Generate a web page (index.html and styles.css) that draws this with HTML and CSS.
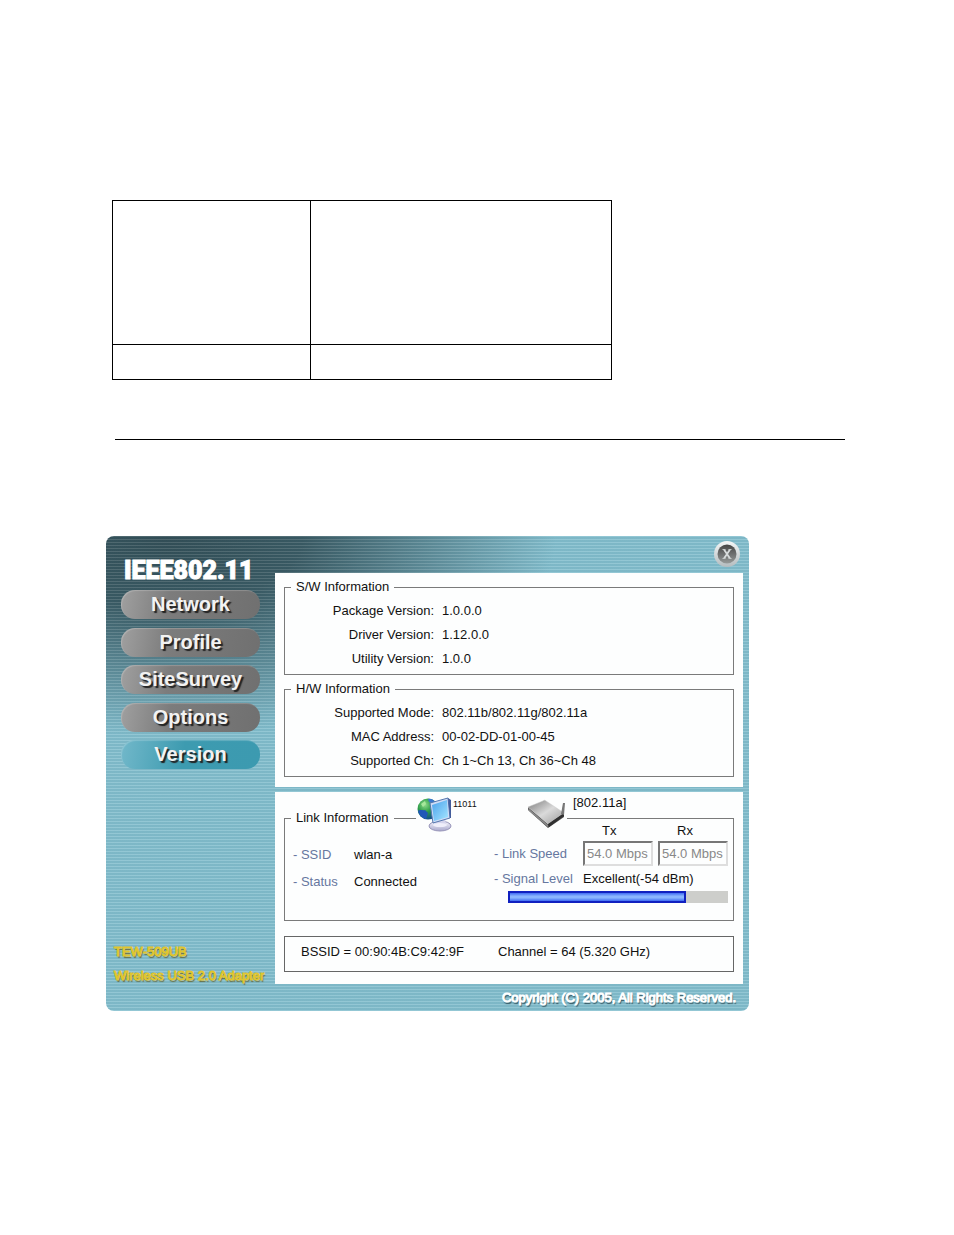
FILE: index.html
```html
<!DOCTYPE html>
<html lang="en">
<head>
	<meta charset="utf-8">
	<title>IEEE802.11 Wireless Utility</title>
	<link rel="stylesheet" href="styles.css">
</head>
<body>
	<table class="spec">
		<tr class="tall"><td></td><td></td></tr>
		<tr><td></td><td></td></tr>
	</table>

	<hr class="rule">

	<div class="utility">
		<div class="sidebar">
			<h1 class="brand">IEEE802.11</h1>
			<nav class="menu">
				<button type="button">Network</button>
				<button type="button">Profile</button>
				<button type="button">SiteSurvey</button>
				<button type="button">Options</button>
				<button type="button" class="active">Version</button>
			</nav>
			<p class="model">TEW-509UB<br>Wireless USB 2.0 Adapter</p>
		</div>

		<div class="main">
			<div class="titlebar">
				<button type="button" class="close" aria-label="Close">
					<svg viewBox="0 0 28 28" width="28" height="28">
						<defs>
							<linearGradient id="rim" x1="0" y1="0" x2="0" y2="1">
								<stop offset="0" stop-color="#f4f6f6"/>
								<stop offset="1" stop-color="#b4bcbf"/>
							</linearGradient>
							<linearGradient id="knob" x1="0" y1="0" x2="0" y2="1">
								<stop offset="0" stop-color="#454545"/>
								<stop offset="1" stop-color="#969a99"/>
							</linearGradient>
						</defs>
						<circle cx="14" cy="14" r="13" fill="url(#rim)"/>
						<circle cx="14" cy="14" r="9.500" fill="url(#knob)"/>
						<path d="M11 9.500L17 18.500M17 9.500L11 18.500" stroke="#d8dcdc" stroke-width="1.800"/>
						<path d="M9.500 9.500h3M15.500 9.500h3M9.500 18.500h3M15.500 18.500h3" stroke="#c4c8c8" stroke-width="1"/>
					</svg>
				</button>
			</div>

			<div class="panel">
				<fieldset class="group">
					<legend>S/W Information</legend>
					<dl class="info">
						<dt>Package Version:</dt><dd>1.0.0.0</dd>
						<dt>Driver Version:</dt><dd>1.12.0.0</dd>
						<dt>Utility Version:</dt><dd>1.0.0</dd>
					</dl>
				</fieldset>
				<fieldset class="group">
					<legend>H/W Information</legend>
					<dl class="info">
						<dt>Supported Mode:</dt><dd>802.11b/802.11g/802.11a</dd>
						<dt>MAC Address:</dt><dd>00-02-DD-01-00-45</dd>
						<dt>Supported Ch:</dt><dd>Ch 1~Ch 13, Ch 36~Ch 48</dd>
					</dl>
				</fieldset>
			</div>

			<div class="panel link-panel">
				<fieldset class="group link">
					<legend>Link Information</legend>

					<div class="devices">
						<svg class="computer" viewBox="0 0 36 36" width="36" height="36">
							<defs>
								<radialGradient id="globe" cx=".35" cy=".3" r=".7">
									<stop offset="0" stop-color="#8fdc8a"/>
									<stop offset=".5" stop-color="#2c9c48"/>
									<stop offset="1" stop-color="#12508c"/>
								</radialGradient>
								<linearGradient id="screen" x1="0" y1="0" x2="1" y2="1">
									<stop offset="0" stop-color="#4aa2ec"/>
									<stop offset="1" stop-color="#a5e6ff"/>
								</linearGradient>
								<linearGradient id="stand" x1="0" y1="0" x2="0" y2="1">
									<stop offset="0" stop-color="#f8f8ff"/>
									<stop offset="1" stop-color="#a9a8cc"/>
								</linearGradient>
							</defs>
							<circle cx="11" cy="12" r="10.500" fill="url(#globe)"/>
							<path d="M1 14C3 12 6 14 8 13L11 16L9 22C5 21 2 18 1 14Z" fill="#1f57b8"/>
							<path d="M11 2C14 1 17 3 18 5L15 6L12 5Z" fill="#3b77cf"/>
							<path d="M4 7L8 4L9 7L6 10Z" fill="#a7e79b"/>
							<ellipse cx="23" cy="29" rx="11" ry="5" fill="url(#stand)" stroke="#9693b8"/>
							<path d="M18 22L28 21L29 28C27 31 20 31 18 28Z" fill="#d5d4ec"/>
							<ellipse cx="23" cy="28" rx="7" ry="2" fill="#efeefa"/>
							<path d="M13 6L31 1L33 21L16 26Z" fill="#cfdcf6" stroke="#5577ae"/>
							<path d="M15 8L30 3L31 20L17 24Z" fill="url(#screen)"/>
							<path d="M31 1L34 3L34 21L33 21Z" fill="#435c9b"/>
						</svg>
						<span class="bits">11011</span>
						<svg class="router" viewBox="0 0 40 32" width="40" height="32">
							<defs>
								<linearGradient id="lid" x1="0" y1="0" x2="1" y2="1">
									<stop offset="0" stop-color="#7c7c7c"/>
									<stop offset=".5" stop-color="#dadada"/>
									<stop offset="1" stop-color="#9a9a9a"/>
								</linearGradient>
							</defs>
							<path d="M1 10L1 13L21 31L37 20L37 16L21 27Z" fill="#505050"/>
							<path d="M1 10L16 4C17 3 18 3 19 4L37 16L21 27Z" fill="url(#lid)" stroke="#c4c4c4" stroke-width=".5"/>
							<path d="M21 27L37 16L37 19L22 30Z" fill="#303030"/>
							<path d="M1 11L21 28L21 30L2 14Z" fill="#8a8a8a"/>
							<path d="M34 17L36 6L38 6L37 18Z" fill="#777"/>
						</svg>
						<span class="band">[802.11a]</span>
					</div>

					<div class="link-body">
						<dl class="connection">
							<dt>- SSID</dt><dd>wlan-a</dd>
							<dt>- Status</dt><dd>Connected</dd>
						</dl>
						<div class="signal">
							<label class="tx" for="tx">Tx</label>
							<label class="rx" for="rx">Rx</label>
							<span class="name">- Link Speed</span>
							<input type="text" id="tx" value="54.0 Mbps" disabled>
							<input type="text" id="rx" value="54.0 Mbps" disabled>
							<label class="name" for="level">- Signal Level</label>
							<span class="quality">Excellent(-54 dBm)</span>
							<progress id="level" value="81" max="100"></progress>
						</div>
					</div>
				</fieldset>

				<div class="status">
					<span>BSSID = 00:90:4B:C9:42:9F</span>
					<span>Channel = 64 (5.320 GHz)</span>
				</div>
			</div>
			<p class="copyright">Copyright (C) 2005, All Rights Reserved.</p>
		</div>
	</div>
</body>
</html>
```
FILE: styles.css
```css
* {
	box-sizing: border-box;
}

body {
	margin: 0;
	padding: 200px 106px 0;
	background: #fff;
	color: #111;
	font-family: "Liberation Sans", Arial, sans-serif;
	font-size: 13px;
	line-height: 16px;
}

dl, dd, p, h1 {
	margin: 0;
}

button {
	border: 0;
	padding: 0;
	font-family: inherit;
	cursor: pointer;
}

/* empty table above the rule */
.spec {
	width: 100%;
	max-width: 500px;
	margin-left: 6px;
	border-collapse: collapse;
	table-layout: fixed;
}

.spec td {
	height: 35px;
	border: 1px solid #000;
}

.spec .tall td {
	height: 144px;
}

.spec td:first-child {
	width: 198px;
}

.rule {
	height: 1px;
	margin: 59px 3px 96px 9px;
	border: 0;
	background: #000;
}

/* utility window */
.utility {
	display: grid;
	grid-template-columns: 169px 1fr;
	max-width: 643px;
	padding-right: 6px;
	border-radius: 8px;
	background:
		repeating-linear-gradient(rgba(255, 255, 255, 0.12) 0 1px, rgba(0, 40, 60, 0.05) 1px 3px),
		radial-gradient(ellipse 390px 200px at 60px 0, #344f57 0, #3b5b64 35%, #84bfce 100%);
}

.sidebar {
	display: flex;
	flex-direction: column;
	padding: 18px 0 23px;
}

.brand {
	padding-left: 18px;
	color: #fff;
	font-family: Roboto, "Liberation Sans", sans-serif;
	font-size: 25px;
	font-weight: 900;
	line-height: 34px;
	-webkit-text-stroke: 1px #fff;
}

.menu {
	display: flex;
	flex-direction: column;
	justify-content: space-between;
	min-height: 179px;
	margin: 2px 15px 0;
}

.menu button {
	height: 29px;
	border-radius: 14px;
	background: linear-gradient(100deg, #a0a0a0, #7c7c7c 35%, #707070);
	box-shadow: inset 1px 1px 1px rgba(255, 255, 255, 0.2);
	color: #f2f2f2;
	font-size: 20px;
	font-weight: bold;
	text-shadow: 2px 2px 1px #222;
}

.menu .active {
	background: linear-gradient(100deg, #72b8ca, #3d9bb0 45%, #3c9ab0);
}

.model {
	margin-top: auto;
	padding-left: 8px;
	color: #e8d535;
	font-size: 13px;
	line-height: 24px;
	white-space: nowrap;
	-webkit-text-stroke: 1px #e0c52f;
	text-shadow: 1px 2px 1px #666a3c;
}

.titlebar {
	display: flex;
	justify-content: flex-end;
	height: 37px;
	padding: 4px 2px 0;
}

.close {
	width: 28px;
	height: 28px;
	background: none;
}

.close svg {
	display: block;
}

.panel {
	padding: 6px 9px 10px;
	background: #fdfefe;
}

.link-panel {
	margin-top: 5px;
	padding: 20px 9px 12px;
}

/* group boxes */
.group {
	min-width: 0;
	margin: 0;
	padding: 4px 8px 3px;
	border: 1px solid #7a7a7a;
}

.group + .group {
	margin-top: 6px;
}

.group legend {
	margin-left: -2px;
	padding: 0 5px;
}

.info {
	display: grid;
	grid-template-columns: 141px 1fr;
	column-gap: 8px;
	line-height: 24px;
}

.info dt {
	text-align: right;
}

.link {
	position: relative;
	padding: 0 4px 17px 8px;
}

.link legend {
	line-height: 12px;
}

/* icons sit on top of the group border */
.devices {
	position: absolute;
	top: -27px;
	left: 131px;
	display: flex;
	align-items: flex-start;
	padding-left: 1px;
	background: #fdfefe;
}

.bits {
	width: 74px;
	font-size: 9px;
	line-height: 14px;
}

.band {
	position: absolute;
	left: 157px;
	top: -2px;
}

.link-body {
	display: grid;
	grid-template-columns: 201px 1fr;
}

.connection {
	display: grid;
	grid-template-columns: 61px 1fr;
	align-content: start;
	padding-top: 17px;
	line-height: 27px;
}

.connection dt, .name {
	color: #66779f;
}

.signal {
	display: grid;
	grid-template-columns: 84px 70px 70px;
	column-gap: 5px;
	align-items: center;
}

.signal .tx {
	grid-column: 2;
	padding-left: 19px;
	line-height: 14px;
}

.signal .rx {
	padding-left: 19px;
	line-height: 14px;
}

.signal input {
	width: 100%;
	height: 25px;
	margin: 3px 0;
	padding: 0 2px;
	border: 2px solid;
	border-color: #777 #dedede #dedede #777;
	background: #fdfefe;
	color: #888;
	font: inherit;
}

.signal .name, .quality {
	line-height: 20px;
}

.quality {
	grid-column: 2 / 4;
}

.signal progress {
	grid-column: 1 / 4;
	width: auto;
	height: 12px;
	margin: 2px 0 0 14px;
	border: 0;
	background: #cdcecb;
	-webkit-appearance: none;
	appearance: none;
}

.signal progress::-webkit-progress-bar {
	background: #cdcecb;
}

.signal progress::-webkit-progress-value {
	border: 2px solid #1020c0;
	background: linear-gradient(#3f6cf2, #8ab6ff 40%, #8ab6ff 60%, #3f6cf2);
}

.status {
	display: grid;
	grid-template-columns: 197px 1fr;
	margin-top: 15px;
	padding: 7px 16px 11px;
	border: 1px solid #666;
}

.copyright {
	padding: 5px 7px 4px;
	color: #fff;
	font-size: 13px;
	line-height: 18px;
	text-align: right;
	white-space: nowrap;
	-webkit-text-stroke: 1px #fff;
	text-shadow: 1px 2px 1px #33525c;
}
```
